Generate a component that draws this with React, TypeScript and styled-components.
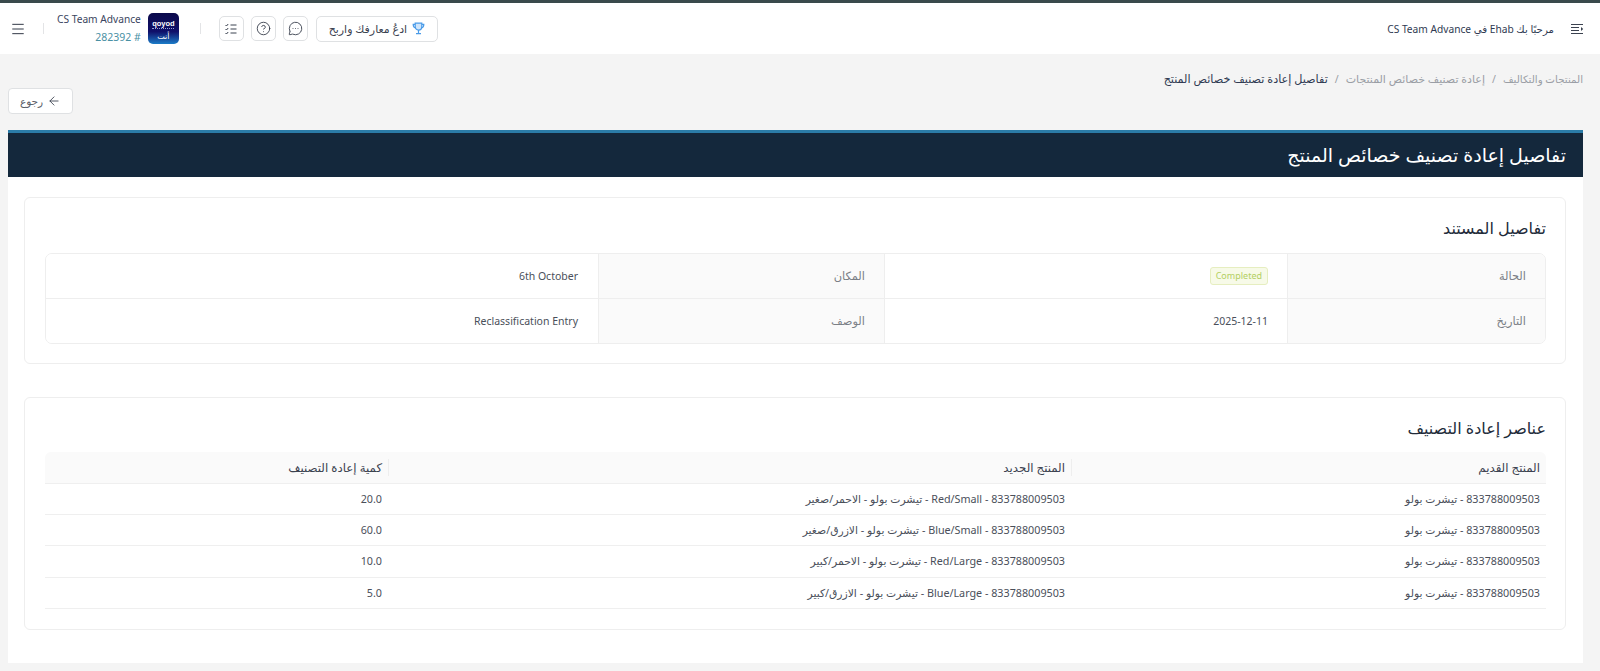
import React from 'react';
import styled, { createGlobalStyle } from 'styled-components';
import { ArrowLeft, CircleHelp, Menu, MessageCircleMore } from 'lucide-react';

const Global = createGlobalStyle`
  html, body {
    margin: 0;
    padding: 0;
    height: 671px;
    overflow: hidden;
    background: #f4f4f4;
    font-family: 'Noto Sans', 'DejaVu Sans', sans-serif;
    color: #3b4250;
  }
  * { box-sizing: border-box; }
`;

const Page = styled.div`
  direction: rtl;
  width: 1600px;
  height: 671px;
  border-top: 3px solid #3a4a4c;
`;

const Header = styled.header`
  height: 51px;
  background: #fff;
  display: flex;
  align-items: center;
  justify-content: space-between;
  padding: 0 11px 0 10px;
`;

const Welcome = styled.div`
  display: flex;
  align-items: center;
  gap: 16px;
  padding-right: 5px;
  font-size: 10.2px;
  color: #2f3a52;
`;

const HeaderTools = styled.div`
  display: flex;
  align-items: center;
`;

const InviteButton = styled.button`
  direction: rtl;
  width: 122px;
  height: 26px;
  margin-left: 8px;
  display: flex;
  align-items: center;
  justify-content: center;
  gap: 5px;
  background: #fff;
  border: 1px solid #dfe1e3;
  border-radius: 5px;
  font: inherit;
  font-size: 11px;
  color: #3b4250;
  padding: 0;
`;

const IconButton = styled.button<{ $end?: boolean }>`
  width: 25px;
  height: 25px;
  margin-left: ${p => (p.$end ? 0 : 7)}px;
  display: flex;
  align-items: center;
  justify-content: center;
  background: #fff;
  border: 1px solid #dfe1e3;
  border-radius: 5px;
  padding: 0;
  color: #333a48;
`;

const VDivider = styled.span<{ $before: number; $after: number }>`
  width: 1px;
  height: 11px;
  background: #e3e4e6;
  margin-right: ${p => p.$before}px;
  margin-left: ${p => p.$after}px;
`;

const Logo = styled.div`
  width: 31px;
  height: 31px;
  border-radius: 5px;
  background: linear-gradient(180deg, #0b0a4a 0%, #10106a 60%, #1b7cc8 100%);
  color: #fff;
  display: flex;
  flex-direction: column;
  align-items: center;
  padding-top: 7px;
  font-size: 8px;
  line-height: 9px;
  overflow: hidden;
`;

const LogoWord = styled.span`
  direction: ltr;
  font-family: 'Liberation Sans', sans-serif;
  font-weight: 700;
  font-size: 7.5px;
  line-height: 7px;
`;

const LogoDots = styled.span`
  width: 22px;
  height: 1px;
  margin: 1px 0 2px;
  border-top: 1px dotted #9aa0d8;
`;

const Company = styled.div`
  margin-right: 7px;
  display: flex;
  flex-direction: column;
  align-items: flex-start;
  gap: 3px;
  font-size: 10.2px;
  line-height: 15px;
  color: #3a4560;
`;

const CompanyCode = styled.span`
  color: #4a90a4;
  font-size: 10.5px;
`;

const Breadcrumb = styled.nav`
  display: flex;
  align-items: center;
  gap: 7px;
  padding: 18px 17px 0 0;
  line-height: 14px;
  font-size: 10.5px;
  color: #9a9ea5;
`;

const Crumb = styled.span<{ $current?: boolean; $size: number }>`
  font-size: ${p => p.$size}px;
  color: ${p => (p.$current ? '#2f3a52' : '#9a9ea5')};
`;

const BackRow = styled.div`
  display: flex;
  justify-content: flex-end;
  padding: 1px 8px 0 0;
  margin-left: 8px;
  margin-top: 1px;
`;

const BackButton = styled.button`
  width: 65px;
  height: 26px;
  display: flex;
  align-items: center;
  justify-content: center;
  gap: 4px;
  background: #fff;
  border: 1px solid #dfe1e3;
  border-radius: 4px;
  font: inherit;
  font-size: 10.5px;
  color: #5b6068;
  padding: 0;
`;

const Panel = styled.main`
  margin: 16px 17px 0 8px;
  height: 533px;
  background: #fff;
  border-top: 3px solid #2b7ca8;
`;

const PanelTitle = styled.h1`
  margin: 0;
  height: 44px;
  background: #14283c;
  color: #fff;
  font-size: 19px;
  font-weight: 400;
  line-height: 44px;
  padding-right: 17px;
`;

const PanelBody = styled.div`
  padding: 20px 17px 0 16px;
  display: flex;
  flex-direction: column;
  gap: 33px;
`;

const Card = styled.section<{ $height: number }>`
  height: ${p => p.$height}px;
  border: 1px solid #eeeeee;
  border-radius: 6px;
  padding: 17px 19px 0 20px;
`;

const CardTitle = styled.h2<{ $gap: number }>`
  margin: 0 0 ${p => p.$gap}px;
  font-size: 16px;
  line-height: 26px;
  font-weight: 400;
  color: #222b3a;
`;

const InfoTable = styled.div`
  display: grid;
  grid-template-columns: 258px 403px 286px 1fr;
  grid-auto-rows: 44.5px;
  border: 1px solid #eeeeee;
  border-radius: 7px;
  overflow: hidden;
`;

const InfoCell = styled.div<{ $label?: boolean; $last?: boolean }>`
  display: flex;
  align-items: center;
  padding: 0 ${p => (p.$last ? 20 : 19)}px;
  font-size: ${p => (p.$label ? 11.4 : 10.5)}px;
  color: ${p => (p.$label ? '#7b7f86' : '#4a4f5a')};
  background: ${p => (p.$label ? '#fafafa' : '#fff')};
  border-left: ${p => (p.$last ? 'none' : '1px solid #eeeeee')};
  border-bottom: 1px solid #eeeeee;
  &:nth-last-child(-n + 4) {
    border-bottom: none;
  }
`;

const StatusTag = styled.span`
  direction: ltr;
  display: inline-block;
  padding: 0 5px;
  height: 18px;
  line-height: 16px;
  font-size: 9px;
  color: #b3cf63;
  background: #f7fae8;
  border: 1px solid #e6eec0;
  border-radius: 3px;
`;

const ItemsTable = styled.table`
  width: 100%;
  border-collapse: collapse;
  table-layout: fixed;
`;

const HeadCell = styled.th`
  position: relative;
  height: 31px;
  padding: 0 6px;
  background: #fafafa;
  border-bottom: 1px solid #efefef;
  text-align: right;
  font-size: 11.8px;
  font-weight: 400;
  color: #3b4250;
  &:first-child { border-top-right-radius: 6px; }
  &:last-child { border-top-left-radius: 6px; }
  &:not(:last-child)::before {
    content: '';
    position: absolute;
    left: 0;
    top: 7px;
    bottom: 7px;
    width: 1px;
    background: #eeeeee;
  }
`;

const BodyCell = styled.td`
  height: 31.4px;
  padding: 0 6px;
  border-bottom: 1px solid #efefef;
  font-size: 10.75px;
  color: #4a4f5a;
  text-align: right;
`;

const rows = [
  ['833788009503 - تيشرت بولو', '833788009503 - Red/Small - تيشرت بولو - الاحمر/صغير', '20.0'],
  ['833788009503 - تيشرت بولو', '833788009503 - Blue/Small - تيشرت بولو - الازرق/صغير', '60.0'],
  ['833788009503 - تيشرت بولو', '833788009503 - Red/Large - تيشرت بولو - الاحمر/كبير', '10.0'],
  ['833788009503 - تيشرت بولو', '833788009503 - Blue/Large - تيشرت بولو - الازرق/كبير', '5.0'],
];

const SidebarToggleIcon = () => (
  <svg width="14" height="12" viewBox="0 0 14 12" fill="none" stroke="#3b4250" strokeWidth="1.1">
    <path d="M1 1.5h12M1 4.5h8M1 7.5h8M1 10.5h12" />
    <path d="M11 4l2.2 2L11 8z" fill="#3b4250" stroke="none" />
  </svg>
);

const ChecklistIcon = () => (
  <svg width="14" height="14" viewBox="0 0 14 14" fill="none" stroke="#3b4250" strokeWidth="1">
    <path d="M6.5 3h6M6.5 7h6M6.5 11h6" />
    <path d="M1.5 3l1 1 1.7-2M1.5 7l1 1 1.7-2M1.5 11l1 1 1.7-2" />
  </svg>
);

const TrophyIcon = () => (
  <svg width="13" height="13" viewBox="0 0 13 13" fill="none" stroke="#4a9be8" strokeWidth="1.2">
    <path d="M3.2 1.2h6.6v3.6a3.3 3.3 0 0 1-6.6 0z" fill="#cfe5fb" />
    <path d="M3.2 2.4H1.2c0 2 .8 3.2 2.4 3.4M9.8 2.4h2c0 2-.8 3.2-2.4 3.4" />
    <path d="M6.5 8v3M4 11.6h5" />
  </svg>
);

export default function App() {
  return (
    <>
      <Global />
      <Page>
        <Header>
          <Welcome>
            <SidebarToggleIcon />
            <span>مرحبًا بك Ehab في CS Team Advance</span>
          </Welcome>
          <HeaderTools>
            <InviteButton>
              <TrophyIcon />
              ادعُ معارفك واربح
            </InviteButton>
            <IconButton><MessageCircleMore size={15} strokeWidth={1.4} /></IconButton>
            <IconButton><CircleHelp size={15} strokeWidth={1.4} /></IconButton>
            <IconButton $end><ChecklistIcon /></IconButton>
            <VDivider $before={18} $after={21} />
            <Logo>
              <LogoWord>qoyod</LogoWord>
              <LogoDots />
              <span>أنت</span>
            </Logo>
            <Company>
              <span>CS Team Advance</span>
              <CompanyCode># 282392</CompanyCode>
            </Company>
            <VDivider $before={13} $after={17} />
            <Menu size={16} strokeWidth={1.5} color="#333a48" />
          </HeaderTools>
        </Header>
        <Breadcrumb>
          <Crumb $size={10.3}>المنتجات والتكاليف</Crumb>
          <span>/</span>
          <Crumb $size={11}>إعادة تصنيف خصائص المنتجات</Crumb>
          <span>/</span>
          <Crumb $size={11.2} $current>تفاصيل إعادة تصنيف خصائص المنتج</Crumb>
        </Breadcrumb>
        <BackRow>
          <BackButton>
            <ArrowLeft size={14} strokeWidth={1.5} color="#3b4250" />
            رجوع
          </BackButton>
        </BackRow>
        <Panel>
          <PanelTitle>تفاصيل إعادة تصنيف خصائص المنتج</PanelTitle>
          <PanelBody>
            <Card $height={167}>
              <CardTitle $gap={12}>تفاصيل المستند</CardTitle>
              <InfoTable>
                <InfoCell $label>الحالة</InfoCell>
                <InfoCell><StatusTag>Completed</StatusTag></InfoCell>
                <InfoCell $label>المكان</InfoCell>
                <InfoCell $last>6th October</InfoCell>
                <InfoCell $label>التاريخ</InfoCell>
                <InfoCell>2025-12-11</InfoCell>
                <InfoCell $label>الوصف</InfoCell>
                <InfoCell $last>Reclassification Entry</InfoCell>
              </InfoTable>
            </Card>
            <Card $height={233}>
              <CardTitle $gap={11}>عناصر إعادة التصنيف</CardTitle>
              <ItemsTable>
                <colgroup>
                  <col width="475" />
                  <col width="683" />
                  <col width="343" />
                </colgroup>
                <thead>
                  <tr>
                    <HeadCell>المنتج القديم</HeadCell>
                    <HeadCell>المنتج الجديد</HeadCell>
                    <HeadCell>كمية إعادة التصنيف</HeadCell>
                  </tr>
                </thead>
                <tbody>
                  {rows.map((row, i) => (
                    <tr key={i}>
                      {row.map((cell, j) => (
                        <BodyCell key={j}>{cell}</BodyCell>
                      ))}
                    </tr>
                  ))}
                </tbody>
              </ItemsTable>
            </Card>
          </PanelBody>
        </Panel>
      </Page>
    </>
  );
}
